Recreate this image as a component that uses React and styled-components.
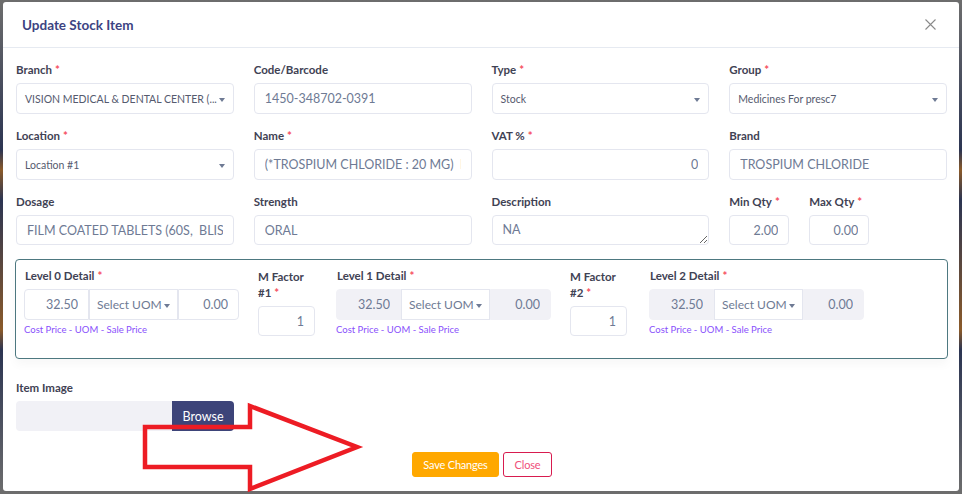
import React from "react";
import styled, { createGlobalStyle } from "styled-components";

const GlobalStyle = createGlobalStyle`
  html, body {
    margin: 0;
    padding: 0;
  }
  body {
    background: #7b7b7b;
    font-family: Lato, "Open Sans", sans-serif;
  }
  * {
    box-sizing: border-box;
  }
`;

const Backdrop = styled.div`
  position: relative;
  width: 962px;
  height: 494px;
  padding: 2px 3px 3px 3px;
  background: linear-gradient(
    180deg,
    #6d6d6d 0,
    #2c3552 150px,
    #8a5a2a 170px,
    #2c3552 200px,
    #8a5a2a 330px,
    #2c3552 350px,
    #6d6d6d 494px
  );
`;

const Modal = styled.div`
  background: #fff;
  height: 100%;
  border-radius: 3px;
  display: flex;
  flex-direction: column;
`;

const Header = styled.div`
  height: 46px;
  padding: 0 22px 0 19px;
  border-bottom: 1px solid #e6eaf1;
  display: flex;
  align-items: center;
  justify-content: space-between;
`;

const Title = styled.h5`
  margin: 0;
  font-size: 13.5px;
  font-weight: 700;
  color: #3c4382;
`;

const CloseX = styled.button`
  border: 0;
  background: none;
  padding: 0;
  width: 14px;
  height: 14px;
  display: flex;
  align-items: center;
  justify-content: center;
`;

const Body = styled.div`
  padding: 13px 12px 0 13px;
`;

const Grid = styled.div`
  display: grid;
  grid-template-columns: repeat(4, minmax(0, 1fr));
  column-gap: 20px;
  row-gap: 13px;
`;

const Field = styled.div`
  display: flex;
  flex-direction: column;
  min-width: 0;
  width: ${p => (p.$w ? `${p.$w}px` : "auto")};
`;

const Pair = styled.div`
  display: flex;
  gap: 20px;
`;

const Label = styled.label`
  font-size: 11.5px;
  font-weight: 700;
  color: #3f4254;
  line-height: ${p => (p.$tall ? "16px" : "14px")};
  padding-top: 2px;
  margin-bottom: ${p => (p.$tall ? "5px" : "6px")};
  width: ${p => (p.$tall ? "60px" : "auto")};
`;

const Req = styled.span`
  color: #f64e60;
  margin-left: 3px;
`;

const Input = styled.input`
  height: ${p => p.$h || 31}px;
  width: 100%;
  min-width: 0;
  border: 1px solid #e4e6ef;
  border-radius: 4px;
  padding: 0 10px;
  font-family: inherit;
  font-size: 12.5px;
  color: #6e7a94;
  text-align: ${p => (p.$right ? "right" : "left")};
  background: ${p => (p.$disabled ? "#f1f1f6" : "#fff")};
  outline: none;
`;

const TextArea = styled.textarea`
  height: 30px;
  width: 100%;
  border: 1px solid #e4e6ef;
  border-radius: 4px;
  padding: 6px 10px;
  font-family: inherit;
  font-size: 12.5px;
  color: #6e7a94;
  resize: vertical;
  outline: none;
`;

const SelectBox = styled.div`
  height: 31px;
  border: 1px solid #e4e6ef;
  border-radius: 4px;
  padding: 0 22px 0 8px;
  display: flex;
  align-items: center;
  position: relative;
  font-size: 10.5px;
  color: #555a6e;
  white-space: nowrap;
  overflow: hidden;

  &::after {
    content: "";
    position: absolute;
    right: 8px;
    top: 14px;
    border-left: 3.5px solid transparent;
    border-right: 3.5px solid transparent;
    border-top: 4px solid #6e7a94;
  }
`;

const LevelBox = styled.div`
  margin: 14px -1px 0 -1px;
  height: 100px;
  border: 1px solid #4d7880;
  border-radius: 4px;
  padding: 7px 8px;
  display: flex;
  box-shadow: 0 6px 10px rgba(0, 0, 0, 0.03);
`;

const LevelGroup = styled.div`
  width: 215px;
  flex: none;
  margin-right: ${p => p.$gap}px;
  display: flex;
  flex-direction: column;

  & > label {
    padding-left: 1px;
  }
`;

const FactorGroup = styled.div`
  width: 57px;
  flex: none;
  margin-right: ${p => p.$gap}px;
  display: flex;
  flex-direction: column;
`;

const InputRow = styled.div`
  display: flex;
`;

const Cell = styled.input`
  height: 31px;
  width: ${p => p.$w}px;
  border: 1px solid ${p => (p.$disabled ? "#f1f1f6" : "#e4e6ef")};
  border-radius: ${p => p.$radius || "0"};
  padding: 0 10px;
  font-family: inherit;
  font-size: 12.5px;
  color: #6e7a94;
  text-align: right;
  background: ${p => (p.$disabled ? "#f1f1f6" : "#fff")};
  outline: none;
`;

const UomSelect = styled.div`
  height: 31px;
  width: 89px;
  flex: none;
  border: 1px solid #e4e6ef;
  padding: 0 0 0 7px;
  display: flex;
  align-items: center;
  font-size: 12px;
  color: #6e7a94;
  white-space: nowrap;
  position: relative;

  &::after {
    content: "";
    position: absolute;
    right: 7px;
    top: 14px;
    border-left: 3px solid transparent;
    border-right: 3px solid transparent;
    border-top: 4px solid #6e7a94;
  }
`;

const Hint = styled.div`
  margin-top: 4px;
  font-size: 9.5px;
  color: #8950fc;
`;

const ImageField = styled.div`
  margin-top: 20px;
  width: 218px;
  display: flex;
  flex-direction: column;
`;

const FileInput = styled.div`
  height: 30px;
  background: #f1f1f6;
  border-radius: 4px;
  display: flex;
  justify-content: flex-end;
`;

const Browse = styled.button`
  width: 62px;
  height: 30px;
  border: 0;
  border-radius: 0 4px 4px 0;
  background: #3d4479;
  color: #fff;
  font-family: inherit;
  font-size: 12.5px;
`;

const Footer = styled.div`
  display: flex;
  justify-content: center;
  gap: 4px;
  margin-top: 21px;
  padding-left: 1px;
`;

const Button = styled.button`
  height: 25px;
  width: ${p => p.$w}px;
  border-radius: 3px;
  font-family: inherit;
  font-size: 11px;
  letter-spacing: -0.2px;
  padding: 0;
  background: ${p => (p.$primary ? "#ffa800" : "#fff")};
  color: ${p => (p.$primary ? "#fff" : "#f0507a")};
  border: 1px solid ${p => (p.$primary ? "#ffa800" : "#d81b4f")};
`;

const Arrow = styled.svg`
  position: absolute;
  left: 0;
  top: 0;
  pointer-events: none;
`;

const levels = [
  { title: "Level 0 Detail", disabled: false, gap: 19 },
  { title: "Level 1 Detail", disabled: true, gap: 19 },
  { title: "Level 2 Detail", disabled: true, gap: 0 }
];

const Level = ({ title, disabled, gap }) => (
  <LevelGroup $gap={gap}>
    <Label>
      {title}
      <Req>*</Req>
    </Label>
    <InputRow>
      <Cell $w={65} $radius="4px 0 0 4px" $disabled={disabled} value="32.50" readOnly />
      <UomSelect>Select UOM</UomSelect>
      <Cell $w={61} $radius="0 4px 4px 0" $disabled={disabled} value="0.00" readOnly />
    </InputRow>
    <Hint>Cost Price - UOM - Sale Price</Hint>
  </LevelGroup>
);

const Factor = ({ n, gap }) => (
  <FactorGroup $gap={gap}>
    <Label $tall>
      M Factor
      <br />#{n}
      <Req>*</Req>
    </Label>
    <Input $right value="1" readOnly $h={30} />
  </FactorGroup>
);

const App = () => {
  return (
    <>
      <GlobalStyle />
      <Backdrop>
        <Modal>
          <Header>
            <Title>Update Stock Item</Title>
            <CloseX aria-label="Close">
              <svg width="11" height="11" viewBox="0 0 11 11">
                <path d="M0.5 0.5L10.5 10.5M10.5 0.5L0.5 10.5" stroke="#8a8a8a" strokeWidth="1.1" />
              </svg>
            </CloseX>
          </Header>
          <Body>
            <Grid>
              <Field>
                <Label>
                  Branch<Req>*</Req>
                </Label>
                <SelectBox>VISION MEDICAL &amp; DENTAL CENTER (...</SelectBox>
              </Field>
              <Field>
                <Label>Code/Barcode</Label>
                <Input value="1450-348702-0391" readOnly />
              </Field>
              <Field>
                <Label>
                  Type<Req>*</Req>
                </Label>
                <SelectBox>Stock</SelectBox>
              </Field>
              <Field>
                <Label>
                  Group<Req>*</Req>
                </Label>
                <SelectBox>Medicines For presc7</SelectBox>
              </Field>

              <Field>
                <Label>
                  Location<Req>*</Req>
                </Label>
                <SelectBox>Location #1</SelectBox>
              </Field>
              <Field>
                <Label>
                  Name<Req>*</Req>
                </Label>
                <Input value="(*TROSPIUM CHLORIDE : 20 MG)  FILM COATED TABLETS" readOnly />
              </Field>
              <Field>
                <Label>
                  VAT %<Req>*</Req>
                </Label>
                <Input $right value="0" readOnly />
              </Field>
              <Field>
                <Label>Brand</Label>
                <Input value="TROSPIUM CHLORIDE" readOnly />
              </Field>

              <Field>
                <Label>Dosage</Label>
                <Input $h={30} value="FILM COATED TABLETS (60S,  BLISTER)" readOnly />
              </Field>
              <Field>
                <Label>Strength</Label>
                <Input $h={30} value="ORAL" readOnly />
              </Field>
              <Field>
                <Label>Description</Label>
                <TextArea value="NA" readOnly />
              </Field>
              <Pair>
                <Field $w={60}>
                  <Label>
                    Min Qty<Req>*</Req>
                  </Label>
                  <Input $h={30} $right value="2.00" readOnly />
                </Field>
                <Field $w={60}>
                  <Label>
                    Max Qty<Req>*</Req>
                  </Label>
                  <Input $h={30} $right value="0.00" readOnly />
                </Field>
              </Pair>
            </Grid>

            <LevelBox>
              <Level {...levels[0]} />
              <Factor n={1} gap={21} />
              <Level {...levels[1]} />
              <Factor n={2} gap={22} />
              <Level {...levels[2]} />
            </LevelBox>

            <ImageField>
              <Label>Item Image</Label>
              <FileInput>
                <Browse>Browse</Browse>
              </FileInput>
            </ImageField>

            <Footer>
              <Button $primary $w={87}>
                Save Changes
              </Button>
              <Button $w={49}>Close</Button>
            </Footer>
          </Body>
        </Modal>
        <Arrow width="962" height="494" viewBox="0 0 962 494">
          <polygon
            points="145,427 250,427 250,406 357,447 250,489 250,467 145,467"
            fill="none"
            stroke="#ed1c24"
            strokeWidth="4.5"
            strokeLinejoin="miter"
          />
        </Arrow>
      </Backdrop>
    </>
  );
};

export default App;
